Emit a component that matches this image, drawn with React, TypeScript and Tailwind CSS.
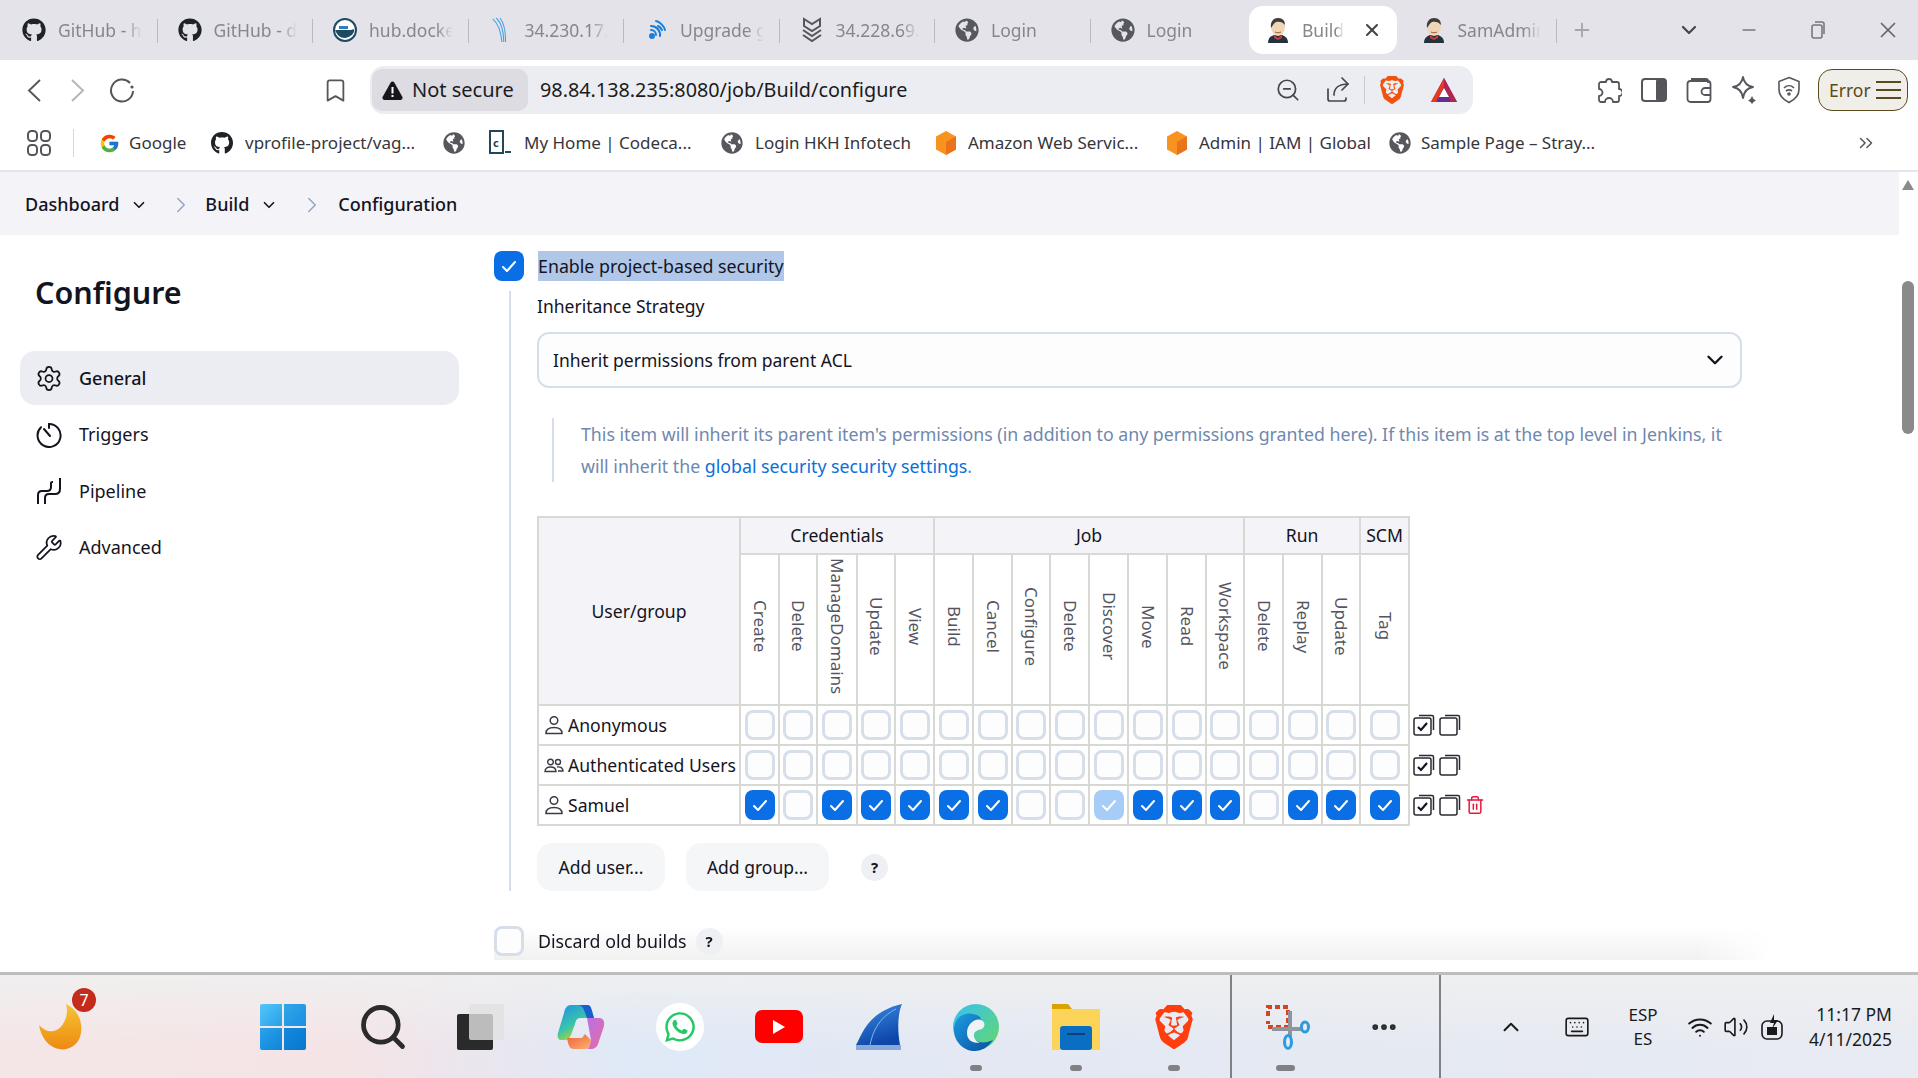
import React from "react";
import { FaGithub, FaWhatsapp, FaGlobeAmericas } from "react-icons/fa";
import { FcGoogle } from "react-icons/fc";
import { SiBrave } from "react-icons/si";
import { Bookmark, ChevronDown, ChevronRight, ChevronUp, ChevronsRight, Minus, Plus, Search, Settings, Wrench, X, ZoomOut, Trash2, Keyboard, Wifi, Volume2, MoreHorizontal } from "lucide-react";

const Jenkins = () => (
  <svg width="24" height="26" viewBox="0 0 24 26">
    <path d="M2 26c0-5 3-7 6-8h8c3 1 6 3 6 8z" fill="#24323f" />
    <path d="M8 18l4 3 4-3v3l-4 2-4-2z" fill="#d33833" />
    <ellipse cx="12" cy="10" rx="7" ry="9" fill="#f0d6b7" />
    <path d="M5 11C4 4 8 1 12 1c5 0 7 3 7 7-2-3-6-4-9-3-2 1-3 3-5 6z" fill="#3d3d3d" />
    <path d="M9 15c2 1 4 1 6 0" stroke="#8c5a3c" strokeWidth="1" fill="none" />
  </svg>
);
const Docker = () => (
  <svg width="24" height="24" viewBox="0 0 24 24">
    <circle cx="12" cy="12" r="11" fill="#fff" stroke="#1f4a63" strokeWidth="2" />
    <path d="M2 12h16c1 0 2-1 3-1 1 4-3 8-9 9-5 0-8-3-10-8z" fill="#1f4a63" />
    <rect x="6" y="8" width="9" height="3" fill="#2d7fb5" />
  </svg>
);
const Fin = () => (
  <svg width="26" height="28" viewBox="0 0 26 28" fill="none" stroke="#4aa3e0" strokeWidth="1.2">
    <path d="M8 1c5 5 8 14 8 26" /><path d="M4 2c6 5 9 14 10 25" /><path d="M12 1c4 5 6 14 6 26" />
  </svg>
);
const Signal = () => (
  <svg width="24" height="24" viewBox="0 0 24 24" fill="none" stroke="#1a7fdc" strokeWidth="2" strokeLinecap="round">
    <circle cx="8" cy="18" r="2" fill="#1a7fdc" />
    <path d="M12 17a5 5 0 0 0-5-5M16 18A9 9 0 0 0 7 8M12 3c4 1 8 5 9 9M14 8c2 1 3 2 4 4" />
  </svg>
);
const Chevrons = () => (
  <svg width="22" height="26" viewBox="0 0 22 26" fill="none" stroke="#55565c" strokeWidth="2">
    <path d="M3 2v7l8 5 8-5V2l-8 5z" /><path d="M2 13l9 6 9-6" /><path d="M2 18l9 6 9-6" />
  </svg>
);
const Globe = ({ s = 24 }: { s?: number }) => <FaGlobeAmericas size={s} className="text-[#56585e]" />;
const Gh = ({ s = 24 }: { s?: number }) => <FaGithub size={s} className="text-[#1e2328]" />;

type TabT = { icon: React.ReactNode; label: string; sep?: boolean; active?: boolean };
const tabs: TabT[] = [
  { icon: <Gh />, label: "GitHub - h", sep: true },
  { icon: <Gh />, label: "GitHub - d", sep: true },
  { icon: <Docker />, label: "hub.docker", sep: true },
  { icon: <Fin />, label: "34.230.17.1", sep: true },
  { icon: <Signal />, label: "Upgrade g", sep: true },
  { icon: <Chevrons />, label: "34.228.69.1", sep: true },
  { icon: <Globe />, label: "Login", sep: true },
  { icon: <Globe />, label: "Login" },
  { icon: <Jenkins />, label: "Build", active: true },
  { icon: <Jenkins />, label: "SamAdmin", sep: true },
];

const TabItem = ({ t }: { t: TabT }) => (
  <div className={"relative flex h-[48px] flex-none items-center gap-[12px] " + (t.active ? "ml-[3px] mr-[4.5px] w-[148px] rounded-[14px] bg-white pl-[17px]" : "w-[155.5px] pl-5 pr-4")}>
    <span className="flex w-[24px] flex-none justify-center">{t.icon}</span>
    <span className={"overflow-hidden whitespace-nowrap text-[17.5px] text-[#86868c] [mask-image:linear-gradient(to_right,black_80%,transparent)] " + (t.active ? "w-[42px]" : "w-[84px]")}>{t.label}</span>
    {t.active && <X size={20} strokeWidth={2.5} className="ml-[6px] text-[#45464c]" />}
    {t.sep && <span className="absolute right-0 top-[13px] h-[24px] w-px bg-[#b9b9c0]" />}
  </div>
);

const TabStrip = () => (
  <div className="flex h-[60px] flex-none items-center bg-[#e3e3e9] pl-[2px]">
    {tabs.map((t, i) => <TabItem key={i} t={t} />)}
    <div className="ml-[5px] flex w-[40px] justify-center"><Plus size={22} className="text-[#a5a5ab]" /></div>
    <div className="flex-1" />
    <div className="flex w-[60px] justify-center"><ChevronDown size={24} strokeWidth={2.2} className="text-[#45464c]" /></div>
    <div className="flex w-[60px] justify-center"><Minus size={20} className="text-[#77787e]" /></div>
    <div className="flex w-[78px] justify-center">
      <svg width="18" height="20" viewBox="0 0 18 20" fill="none" stroke="#77787e" strokeWidth="1.6"><rect x="3" y="5" width="10" height="13" rx="2" /><path d="M6 2h7a2 2 0 0 1 2 2v10" /></svg>
    </div>
    <div className="flex w-[61px] justify-center"><X size={26} strokeWidth={1.6} className="text-[#66676d]" /></div>
  </div>
);

const Cell = ({ children, w }: { children: React.ReactNode; w: string }) => (
  <div className={"flex flex-none items-center justify-center " + w}>{children}</div>
);

const Toolbar = () => (
  <div className="flex h-[60px] flex-none items-center bg-white pl-[12px]">
    <Cell w="w-[44px]">
      <svg width="14" height="23" viewBox="0 0 14 23" fill="none" stroke="#55565c" strokeWidth="1.9"><path d="M13 1L2 11.500 13 22" /></svg>
    </Cell>
    <Cell w="w-[44px]">
      <svg width="14" height="23" viewBox="0 0 14 23" fill="none" stroke="#b4b5ba" strokeWidth="1.9"><path d="M1 1l11 10.500L1 22" /></svg>
    </Cell>
    <Cell w="w-[44px]">
      <svg width="26" height="26" viewBox="0 0 26 26" fill="none" stroke="#55565c" strokeWidth="2"><path d="M21 6A11 11 0 1 0 24 14" /><circle cx="23" cy="10" r="1.600" fill="#55565c" stroke="none" /></svg>
    </Cell>
    <div className="ml-[169px] flex w-[44px] justify-center"><Bookmark size={27} strokeWidth={1.6} className="text-[#55565c]" /></div>
    <div className="ml-[13px] flex h-[48px] w-[1103px] flex-none items-center rounded-[14px] bg-[#ecedf2] pl-[2px]">
      <div className="flex h-[42px] w-[156px] flex-none items-center gap-[9px] rounded-[10px] bg-[#dcdce2] pl-[10px] text-[20px] text-[#1b1b20]">
        <svg width="21" height="19" viewBox="0 0 21 19"><path d="M10.5 0.5c.8 0 1.4.4 1.8 1.1l8 14.2c.8 1.4-.2 3.2-1.8 3.2h-16c-1.6 0-2.6-1.8-1.8-3.2l8-14.2c.4-.7 1-1.1 1.8-1.1z" fill="#17171b" /><rect x="9.5" y="6" width="2" height="6.5" fill="#fff" /><rect x="9.5" y="14" width="2" height="2" fill="#fff" /></svg>
        <span>Not secure</span>
      </div>
      <span className="ml-[12px] whitespace-nowrap text-[19.8px] text-[#1b1b20]">98.84.138.235:8080/job/Build/configure</span>
      <div className="flex-1" />
      <Cell w="mr-[6px] w-[44px]"><ZoomOut size={26} strokeWidth={1.6} className="text-[#45464c]" /></Cell>
      <Cell w="w-[44px]">
        <svg width="28" height="28" viewBox="0 0 28 28" fill="none" stroke="#45464c" strokeWidth="1.700" strokeLinecap="round" strokeLinejoin="round"><path d="M4 13v10a2 2 0 0 0 2 2h14a2 2 0 0 0 2-2v-1" /><path d="M10 19c0-7 5-11 14-11" /><path d="M18 2l6 6-6 6" /></svg>
      </Cell>
      <span className="ml-[4px] mr-[4px] h-[28px] w-px bg-[#c9c9cf]" />
      <Cell w="w-[46px]"><SiBrave size={28} className="text-[#f1520d]" /></Cell>
      <div className="flex w-[58px] flex-none justify-center">
        <svg width="28" height="28" viewBox="0 0 28 28"><path d="M14 2L27 26H1z" fill="#662d91" /><path d="M14 2L27 26h-6L14 11z" fill="#b32550" /><path d="M14 2L1 26h5l8-15z" fill="#e8391f" /><path d="M14 12l5 9H9z" fill="#fff" /></svg>
      </div>
    </div>
    <div className="ml-[113px] flex">
      <Cell w="w-[45px]">
        <svg width="26" height="28" viewBox="0 0 26 28" fill="none" stroke="#55565c" strokeWidth="1.800" strokeLinejoin="round"><path d="M10 6a3 3 0 1 1 6 0h5c1 0 2 1 2 2v5a3.500 3.500 0 0 1 0 7v4c0 1-1 2-2 2h-4a4 4 0 0 0-8 0H5c-1 0-2-1-2-2v-4a3.500 3.500 0 0 0 0-7V8c0-1 1-2 2-2z" /></svg>
      </Cell>
      <Cell w="w-[45px]">
        <svg width="26" height="24" viewBox="0 0 26 24"><rect x="1" y="1" width="24" height="22" rx="3" fill="none" stroke="#55565c" strokeWidth="2" /><rect x="15" y="1" width="10" height="22" rx="2" fill="#55565c" /></svg>
      </Cell>
      <Cell w="w-[45px]">
        <svg width="26" height="26" viewBox="0 0 26 26" fill="none" stroke="#55565c" strokeWidth="1.800"><path d="M5 2h15a2 2 0 0 1 2 2v2" /><rect x="1.500" y="4" width="23" height="21" rx="3" /><path d="M25 11h-6a3 3 0 0 0 0 7h6" /></svg>
      </Cell>
      <Cell w="w-[45px]">
        <svg width="26" height="28" viewBox="0 0 26 28" fill="none" stroke="#55565c" strokeWidth="1.800" strokeLinejoin="round"><path d="M12 1c1 6 4 9 10 10-6 1-9 4-10 11C11 15 8 12 2 11c6-1 9-4 10-10z" /><path d="M21 20l1.500 3 2.500 1.500-2.500 1.500-1.500 2-1.500-2-2.500-1.500 2.500-1.500z" fill="#55565c" stroke="none" /></svg>
      </Cell>
      <Cell w="w-[45px]">
        <svg width="24" height="28" viewBox="0 0 24 28" fill="none" stroke="#55565c" strokeWidth="1.6"><path d="M12 1.500l10 4v8c0 6-4 10-10 13C6 23.500 2 19.500 2 13.500v-8z" /><path d="M7 12c3-3 7-3 10 0M9 15c2-1.500 4-1.500 6 0" /><circle cx="12" cy="18" r="1" fill="#55565c" /></svg>
      </Cell>
    </div>
    <div className="ml-[7px] flex h-[42px] w-[90px] flex-none items-center gap-[5px] rounded-[14px] border border-[#5b4a1e] bg-[#efeee9] pl-[10px] text-[17.5px] text-[#5b4a1e]">
      <span>Error</span>
      <span className="flex w-[25px] flex-col gap-[6px]">
        <span className="h-[2px] bg-[#5b4a1e]" /><span className="h-[2px] bg-[#5b4a1e]" /><span className="h-[2px] bg-[#5b4a1e]" />
      </span>
    </div>
  </div>
);

const AwsCube = () => (
  <svg width="22" height="24" viewBox="0 0 22 24"><path d="M11 0l10 5.500v13L11 24 1 18.500v-13z" fill="#f7931e" /><path d="M11 11l10-5.500v13L11 24z" fill="#e8731a" /></svg>
);
const Codecademy = () => (
  <svg width="22" height="26" viewBox="0 0 22 26" fill="none"><rect x="1" y="1" width="13" height="22" stroke="#24465c" strokeWidth="2" /><text x="4" y="17" fontSize="11" fontWeight="700" fill="#24465c" fontFamily="Noto Sans">c</text><rect x="16" y="21" width="6" height="2" fill="#24465c" /></svg>
);

const Mark = ({ icon, label, w }: { icon: React.ReactNode; label?: string; w: string }) => (
  <div className={"flex flex-none items-center " + w}>
    <span className="flex w-[22px] flex-none justify-center">{icon}</span>
    {label && <span className="whitespace-nowrap text-[17px] text-[#35363b]">{label}</span>}
  </div>
);

const Bookmarks = () => (
  <div className="flex h-[52px] flex-none items-center border-b-2 border-[#e6e6e8] bg-white pb-[4px] pl-[27px]">
    <svg width="24" height="26" viewBox="0 0 24 26" fill="none" stroke="#55565c" strokeWidth="2"><rect x="1" y="1" width="9" height="10" rx="3.500" /><rect x="14" y="1" width="9" height="10" rx="3.500" /><rect x="1" y="15" width="9" height="10" rx="3.500" /><rect x="14" y="15" width="9" height="10" rx="3.500" /></svg>
    <span className="ml-[22px] mr-[24px] h-[28px] w-px bg-[#d6d6da]" />
    <Mark icon={<FcGoogle size={21} />} label="Google" w="w-[113px] gap-[9px]" />
    <Mark icon={<Gh />} label="vprofile-project/vag..." w="w-[232px] gap-[12px]" />
    <Mark icon={<Globe s={22} />} w="w-[46px]" />
    <Mark icon={<Codecademy />} label="My Home | Codeca..." w="w-[232px] gap-[13px]" />
    <Mark icon={<Globe s={22} />} label="Login HKH Infotech" w="w-[214px] gap-[12px]" />
    <Mark icon={<AwsCube />} label="Amazon Web Servic..." w="w-[231px] gap-[11px]" />
    <Mark icon={<AwsCube />} label="Admin | IAM | Global" w="w-[223px] gap-[11px]" />
    <Mark icon={<Globe s={22} />} label="Sample Page – Stray..." w="w-[240px] gap-[10px]" />
    <div className="flex-1" />
    <ChevronsRight size={22} strokeWidth={1.6} className="mr-[41px] text-[#55565c]" />
  </div>
);

const Crumbs = () => (
  <div className="flex h-[63px] flex-none items-center bg-[#f3f3f8] pl-[25px] pt-[2px] text-[18px] font-medium text-[#14141f]">
    <span>Dashboard</span>
    <ChevronDown size={18} strokeWidth={2.2} className="ml-[11px]" />
    <ChevronRight size={26} strokeWidth={1.2} className="ml-[20px] text-[#8ea0bd]" />
    <span className="ml-[11px]">Build</span>
    <ChevronDown size={18} strokeWidth={2.2} className="ml-[11px]" />
    <ChevronRight size={26} strokeWidth={1.2} className="ml-[21px] text-[#8ea0bd]" />
    <span className="ml-[13px]">Configuration</span>
  </div>
);

const SideItem = ({ icon, label, active }: { icon: React.ReactNode; label: string; active?: boolean }) => (
  <div className={"flex h-[54px] items-center gap-[16px] rounded-[15px] pl-[15px] text-[18px] text-[#14141f] " + (active ? "bg-[#ecedf3] font-medium" : "")}>
    <span className="flex w-[28px] justify-center">{icon}</span>
    <span>{label}</span>
  </div>
);

const Sidebar = () => (
  <div className="w-[494px] flex-none pl-[20px] pr-[35px]">
    <h1 className="ml-[15px] mt-[32px] text-[30.500px] font-semibold leading-[50px] text-[#14141f]">Configure</h1>
    <div className="mt-[34px] flex flex-col gap-[2.500px]">
      <SideItem active label="General" icon={<Settings size={31} strokeWidth={1.5} />} />
      <SideItem label="Triggers" icon={
        <svg width="26" height="26" viewBox="0 0 26 26" fill="none" stroke="#14141f" strokeWidth="2" strokeLinecap="round"><path d="M13 2a11.500 11.500 0 1 1-8 3.300" /><path d="M13 2v4" /><path d="M8 7l6 7" /></svg>
      } />
      <SideItem label="Pipeline" icon={
        <svg width="26" height="28" viewBox="0 0 26 28" fill="none" stroke="#14141f" strokeWidth="2"><path d="M2 27v-9c0-3 2-4 4-4h5c3 0 4-2 4-4V6c0-1 1-1 2-1" /><path d="M24 1v11c0 3-2 5-5 5h-6c-2 0-4 1-4 4v6" /></svg>
      } />
      <SideItem label="Advanced" icon={<Wrench size={29} strokeWidth={1.5} />} />
    </div>
  </div>
);

const Box = ({ state = 0 }: { state?: number }) => {
  if (state === 0) return <span className="inline-block h-[30px] w-[30px] rounded-[8px] border-[3px] border-[#d6deea] bg-[#fdfdfe] align-middle" />;
  return (
    <span className={"inline-flex h-[30px] w-[30px] items-center justify-center rounded-[8px] align-middle " + (state === 1 ? "bg-[#0a6fe4]" : "bg-[#a6cdf7]")}>
      <svg width="16" height="13" viewBox="0 0 16 13" fill="none" stroke="#fff" strokeWidth="2" strokeLinecap="round" strokeLinejoin="round"><path d="M2 7l4 4 8-9" /></svg>
    </span>
  );
};

const Help = () => (
  <span className="flex h-[27px] w-[27px] flex-none items-center justify-center rounded-full bg-[#eef0f4] text-[15px] font-bold text-[#14141f]">?</span>
);

const colW = ["w-[202px]", "w-[39px]", "w-[38px]", "w-[40px]", "w-[38px]", "w-[39px]", "w-[39px]", "w-[39px]", "w-[38px]", "w-[39px]", "w-[39px]", "w-[39px]", "w-[39px]", "w-[38px]", "w-[39px]", "w-[39px]", "w-[38px]", "w-[49px]", "w-[100px]"];
const perms = ["Create", "Delete", "ManageDomains", "Update", "View", "Build", "Cancel", "Configure", "Delete", "Discover", "Move", "Read", "Workspace", "Delete", "Replay", "Update", "Tag"];

const Person = () => (
  <svg width="20" height="20" viewBox="0 0 20 20" fill="none" stroke="#3c3c46" strokeWidth="1.5"><circle cx="10" cy="5.500" r="3.800" /><path d="M2 18.500c0-4 3-6 8-6s8 2 8 6z" /></svg>
);
const People = () => (
  <svg width="20" height="20" viewBox="0 0 20 20" fill="none" stroke="#3c3c46" strokeWidth="1.400"><circle cx="6.500" cy="7" r="2.800" /><circle cx="14" cy="7" r="2.500" /><path d="M1 16.500c0-3 2.500-4.500 5.500-4.500s5.500 1.500 5.500 4.500z" /><path d="M13 12c3.500-.5 6 1 6 4h-5" /></svg>
);
const Stack = ({ check }: { check?: boolean }) => (
  <svg width="22" height="22" viewBox="0 0 22 22" fill="none" stroke="#2a2a33" strokeWidth="1.500">
    <path d="M6 1.500h13a1.500 1.500 0 0 1 1.500 1.500v13" />
    <rect x="1" y="4" width="17" height="17" rx="2" />
    {check && <path d="M5 13l3 3 6-7" strokeWidth="2.200" stroke="#14141f" />}
  </svg>
);

const rows: { name: string; icon: React.ReactNode; vals: number[]; del?: boolean }[] = [
  { name: "Anonymous", icon: <Person />, vals: Array(17).fill(0) },
  { name: "Authenticated Users", icon: <People />, vals: Array(17).fill(0) },
  { name: "Samuel", icon: <Person />, vals: [1, 0, 1, 1, 1, 1, 1, 0, 0, 2, 1, 1, 1, 0, 1, 1, 1], del: true },
];

const th = "border-2 border-[#d8d8d4] bg-[#f3f3f8] font-normal text-[#14141f] text-[17.600px]";
const td = "border-2 border-[#d8d8d4] p-0 text-center";

const Matrix = () => (
  <table className="mt-[34px] w-[971px] table-fixed border-collapse text-[17.600px]">
    <colgroup>{colW.map((c, i) => <col key={i} className={c} />)}</colgroup>
    <thead>
      <tr className="h-[37px]">
        <th rowSpan={2} className={th}>User/group</th>
        <th colSpan={5} className={th}>Credentials</th>
        <th colSpan={8} className={th}>Job</th>
        <th colSpan={3} className={th}>Run</th>
        <th className={th}>SCM</th>
        <th className="border-0 p-0" />
      </tr>
      <tr className="h-[151px]">
        {perms.map((p, i) => (
          <th key={i} className="border-2 border-[#d8d8d4] p-0 font-normal">
            <span className="inline-block text-[17px] leading-[20px] text-[#55555f] [writing-mode:vertical-rl]">{p}</span>
          </th>
        ))}
        <th className="border-0 p-0" />
      </tr>
    </thead>
    <tbody>
      {rows.map((r) => (
        <tr key={r.name} className="h-[40px]">
          <td className="border-2 border-[#d8d8d4] p-0">
            <span className="flex items-center gap-[4px] whitespace-nowrap pl-[5px] text-[#14141f]">{r.icon}{r.name}</span>
          </td>
          {r.vals.map((v, i) => <td key={i} className={td}><Box state={v} /></td>)}
          <td className="p-0 pl-[3px]">
            <span className="flex items-center gap-[4px]">
              <Stack check /><Stack />
              {r.del && <Trash2 size={20} strokeWidth={1.800} className="text-[#e6193c]" />}
            </span>
          </td>
        </tr>
      ))}
    </tbody>
  </table>
);

const Content = () => (
  <div className="relative flex-1 overflow-hidden pl-0 text-[#14141f]">
    <div className="mt-[16px] flex h-[30px] items-center">
      <Box state={1} />
      <span className="ml-[14px] bg-[#b0c7e8] text-[17.800px] leading-[30px]">Enable project-based security</span>
    </div>
    <div className="ml-[15px] mt-[10px] w-[1233px] border-l-2 border-[#d6deea] pl-[26px] text-[17.500px]">
      <div className="leading-[30px]">Inheritance Strategy</div>
      <div className="mt-[11px] flex h-[56px] items-center justify-between rounded-[12px] border-2 border-[#d6deea] bg-[#fdfdfe] pl-[14px] pr-[12px]">
        <span>Inherit permissions from parent ACL</span>
        <ChevronDown size={26} strokeWidth={2.2} />
      </div>
      <div className="ml-[15px] mt-[30px] border-l-2 border-[#d6deea] pl-[27px] text-[17.750px] leading-[32px] text-[#7088ad]">
        This item will inherit its parent item's permissions (in addition to any permissions granted here). If this item is at the top level in Jenkins, it will inherit the <span className="text-[#0b6fd9]">global security security settings</span>.
      </div>
      <Matrix />
      <div className="mt-[17px] flex items-center">
        <span className="flex h-[48px] w-[128px] items-center justify-center rounded-[15px] bg-[#f5f6f8]">Add user...</span>
        <span className="ml-[21px] flex h-[48px] w-[143px] items-center justify-center rounded-[15px] bg-[#f5f6f8]">Add group...</span>
        <span className="ml-[32px]"><Help /></span>
      </div>
    </div>
    <div className="mt-[35px] flex h-[34px] w-[1279px] items-start bg-[linear-gradient(180deg,#ffffff,#f1f1f1)] [mask-image:linear-gradient(to_right,black_94%,transparent)]">
      <Box />
      <span className="ml-[14px] text-[17.800px] leading-[30px]">Discard old builds</span>
      <span className="ml-[9px] mt-[2px]"><Help /></span>
    </div>
  </div>
);

const Scrollbar = () => (
  <div className="relative w-[19px] flex-none bg-white">
    <div className="absolute left-[3px] top-[8px] h-0 w-0 border-x-[6px] border-b-[10px] border-x-transparent border-b-[#8a8a8a]" />
    <div className="absolute left-[3px] top-[109px] h-[153px] w-[12px] rounded-full bg-[#8a8a8a]" />
  </div>
);

const Dot = ({ wide }: { wide?: boolean }) => (
  <span className={"absolute bottom-[7px] h-[6px] rounded-full bg-[#808085] " + (wide ? "w-[19px] -translate-x-[3px]" : "w-[12px]")} />
);

const TB = ({ w, children, dot, wide }: { w: string; children: React.ReactNode; dot?: boolean; wide?: boolean }) => (
  <div className={"relative flex h-full flex-none items-center justify-center " + w}>
    {children}
    {dot && <Dot wide={wide} />}
  </div>
);

const Taskbar = () => (
  <div className="flex h-[106px] flex-none items-stretch border-t-[3px] border-[#bdbdbd] bg-[linear-gradient(180deg,rgba(240,240,240,0.85),rgba(240,240,240,0)_70%),linear-gradient(90deg,#f4e6e7_0%,#f4e4e6_18%,#dfe9f7_33%,#e3e8f3_50%,#e8ebf2_100%)] pl-[12px] text-[#1a1a1a]">
    <TB w="w-[98px]">
      <svg width="44" height="46" viewBox="0 0 44 46">
        <defs><linearGradient id="mo" x1="0" y1="0" x2="0" y2="1"><stop offset="0" stopColor="#f6c433" /><stop offset="1" stopColor="#ee8a13" /></linearGradient></defs>
        <path d="M27 0c13 6 18 20 14 33-3 9-13 14-21 12C9 43 2 33 0 21c8 9 18 8 24-1 4-6 5-13 3-20z" fill="url(#mo)" />
      </svg>
      <span className="absolute left-[60px] top-[13px] flex h-[24px] w-[24px] items-center justify-center rounded-full bg-[#c42b1c] text-[16px] text-white">7</span>
    </TB>
    <div className="w-[123px] flex-none" />
    <TB w="w-[99px]">
      <div className="grid grid-cols-2 gap-[2px]">
        <span className="h-[22px] w-[22px] rounded-tl-[2px] bg-[linear-gradient(135deg,#52c6fa,#28a0e8)]" />
        <span className="h-[22px] w-[22px] rounded-tr-[2px] bg-[linear-gradient(135deg,#30a6ea,#1a90e0)]" />
        <span className="h-[22px] w-[22px] rounded-bl-[2px] bg-[linear-gradient(135deg,#2aa2ea,#0f85d8)]" />
        <span className="h-[22px] w-[22px] rounded-br-[2px] bg-[linear-gradient(135deg,#1489dc,#0478cf)]" />
      </div>
    </TB>
    <TB w="w-[102px]"><Search size={52} strokeWidth={2.2} className="text-[#2b2b2b]" /></TB>
    <TB w="w-[86px] pl-[8px]">
      <div className="relative h-[46px] w-[48px]">
        <span className="absolute bottom-0 left-0 h-[36px] w-[36px] rounded-[2px] bg-[#2a2a2a]" />
        <span className="absolute right-[1px] top-0 h-[36px] w-[35px] rounded-[2px] bg-[rgba(225,225,225,0.8)]" />
      </div>
    </TB>
    <TB w="w-[122px]">
      <svg width="48" height="48" viewBox="0 0 48 48">
        <defs>
          <linearGradient id="c1" x1="0" y1="0" x2="0.6" y2="1"><stop offset="0" stopColor="#1c8fe8" /><stop offset="0.6" stopColor="#3bc6a8" /><stop offset="1" stopColor="#e4d600" /></linearGradient>
          <linearGradient id="c2" x1="0" y1="0" x2="1" y2="1"><stop offset="0" stopColor="#b870e8" /><stop offset="1" stopColor="#e86ca0" /></linearGradient>
          <linearGradient id="c3" x1="0" y1="0" x2="1" y2="1"><stop offset="0" stopColor="#f0603a" /><stop offset="1" stopColor="#fbb070" /></linearGradient>
        </defs>
        <path d="M14 2h16c3 0 4 2 5 6l2 7H24c-4 0-5 2-6 6l-4 11c-1 3-3 5-6 5H4C1 37 0 34 1 30L7 10c1-5 3-8 7-8z" fill="url(#c1)" />
        <path d="M20 2h10c3 0 4 2 5 6l2 7h-7l-3-8c-1-3-3-5-7-5z" fill="#1a5fd0" />
        <path d="M30 15h12c4 0 6 3 5 8l-5 15c-1 5-4 8-7 8h-5c3-2 3-6 4-9z" fill="url(#c2)" />
        <path d="M10 35h15l3-4 6 6c-1 5-2 9-6 9H17c-4 0-5-3-6-6z" fill="url(#c3)" />
      </svg>
    </TB>
    <TB w="w-[76px]">
      <span className="flex h-[48px] w-[48px] items-center justify-center rounded-full bg-white"><FaWhatsapp size={34} className="text-[#25c866]" /></span>
    </TB>
    <TB w="w-[122px]">
      <span className="flex h-[33px] w-[48px] items-center justify-center rounded-[7px] bg-[#fe0000]">
        <svg width="14" height="16" viewBox="0 0 14 16"><path d="M1 1l12 7-12 7z" fill="#fff" /></svg>
      </span>
    </TB>
    <TB w="w-[78px]">
      <svg width="46" height="46" viewBox="0 0 46 46">
        <defs><linearGradient id="sh" x1="0" y1="0" x2="0.4" y2="1"><stop offset="0" stopColor="#3f8ee6" /><stop offset="1" stopColor="#0d47a8" /></linearGradient></defs>
        <path d="M46 0c-4 9-5 24-2 41H0C5 34 10 8 46 0z" fill="url(#sh)" />
        <path d="M40 5c-12 6-22 16-26 36" stroke="#7fb6f0" strokeWidth="1" fill="none" />
        <rect x="0" y="41" width="45" height="5" fill="#8aa9d8" />
      </svg>
    </TB>
    <TB w="w-[116px]" dot>
      <svg width="50" height="48" viewBox="0 0 46 48">
        <defs>
          <linearGradient id="e1" x1="0" y1="0" x2="1" y2="1"><stop offset="0" stopColor="#35c1f1" /><stop offset="1" stopColor="#66d86a" /></linearGradient>
          <linearGradient id="e2" x1="0" y1="0" x2="1" y2="1"><stop offset="0" stopColor="#1b9de2" /><stop offset="1" stopColor="#0c4f9e" /></linearGradient>
        </defs>
        <circle cx="23" cy="24" r="23" fill="url(#e1)" />
        <path d="M1 24C3 12 14 8 24 12c6 3 6 10 2 12-4 2-8 5-6 10 3 6 12 7 20 3-5 7-11 11-18 11C10 48 0 38 1 24z" fill="url(#e2)" />
        <path d="M14 30c0-9 8-15 14-13 5 2 4 7 1 9-4 1-9 2-8 8 1 3 3 5 6 6-8 0-13-3-13-10z" fill="#f0f2f6" />
      </svg>
    </TB>
    <TB w="w-[84px]" dot>
      <svg width="48" height="46" viewBox="0 0 48 46">
        <path d="M0 0h16l4 5h-20z" fill="#dba300" />
        <rect x="0" y="5" width="48" height="41" fill="#fcd45a" />
        <rect x="8" y="22" width="32" height="24" rx="3" fill="#0a6fc2" />
        <rect x="15" y="29" width="18" height="2" fill="#0c3f78" />
      </svg>
    </TB>
    <TB w="w-[112px]" dot>
      <SiBrave size={44} className="text-[#ff3d0d]" />
    </TB>
    <span className="w-[2px] flex-none bg-[#808085]" />
    <TB w="w-[112px]" dot wide>
      <svg width="44" height="46" viewBox="0 0 44 46" fill="none">
        <path d="M2 12V3h20v20H2v-6" stroke="#d8431f" strokeWidth="4" strokeDasharray="5 3" />
        <path d="M24 7v26" stroke="#8f959c" strokeWidth="4" />
        <path d="M6 25h31" stroke="#8f959c" strokeWidth="4" />
        <ellipse cx="39" cy="23" rx="3.500" ry="5" stroke="#2d9be0" strokeWidth="3" />
        <ellipse cx="22" cy="38" rx="3.500" ry="6.500" stroke="#2d9be0" strokeWidth="3" />
      </svg>
    </TB>
    <TB w="w-[80px]"><MoreHorizontal size={30} strokeWidth={2.6} className="text-[#2a2a2a]" /></TB>
    <span className="ml-[15px] w-[2px] flex-none bg-[#808085]" />
    <TB w="ml-[48px] w-[44px]"><ChevronUp size={26} strokeWidth={1.8} /></TB>
    <TB w="ml-[22px] w-[44px]"><Keyboard size={26} strokeWidth={1.5} /></TB>
    <TB w="ml-[19px] w-[50px]">
      <span className="flex flex-col items-center text-[17px] leading-[24px]"><span>ESP</span><span>ES</span></span>
    </TB>
    <TB w="ml-[14px] w-[36px]"><Wifi size={26} strokeWidth={1.8} /></TB>
    <TB w="w-[36px]"><Volume2 size={26} strokeWidth={1.5} /></TB>
    <TB w="w-[35px]">
      <svg width="24" height="28" viewBox="0 0 24 28" fill="none" stroke="#1a1a1a" strokeWidth="1.600"><rect x="2" y="8" width="20" height="18" rx="5" /><rect x="7" y="14" width="10" height="8" fill="#1a1a1a" stroke="none" /><path d="M14 1l-4 9h4l-2 6 6-9h-4z" fill="#1a1a1a" stroke="none" /></svg>
    </TB>
    <div className="flex flex-1 flex-col items-end justify-center pr-[26px] text-[17.500px] leading-[25px]">
      <span>11:17 PM</span>
      <span>4/11/2025</span>
    </div>
  </div>
);

export default function App() {
  return (
    <div className="flex h-[1078px] w-[1918px] flex-col overflow-hidden bg-white font-['Noto_Sans',sans-serif]">
      <TabStrip />
      <Toolbar />
      <Bookmarks />
      <div className="flex min-h-0 flex-1">
        <div className="flex min-w-0 flex-1 flex-col">
          <Crumbs />
          <div className="flex min-h-0 flex-1">
            <Sidebar />
            <Content />
          </div>
        </div>
        <Scrollbar />
      </div>
      <Taskbar />
    </div>
  );
}
